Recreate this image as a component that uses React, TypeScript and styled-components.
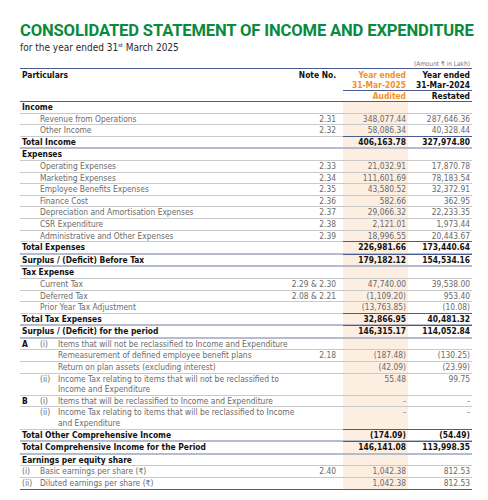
import React from "react";
import styled, { createGlobalStyle } from "styled-components";

const GlobalStyle = createGlobalStyle`
  html, body {
    margin: 0;
    padding: 0;
    background: #ffffff;
  }
  body {
    font-family: "DejaVu Sans Condensed", "DejaVu Sans", sans-serif;
    font-stretch: condensed;
    color: #222;
  }
`;

type Kind = "section" | "item" | "total";

interface Line {
  kind: Kind;
  label: React.ReactNode;
  mark?: string;
  roman?: string;
  indent?: 0 | 1 | 2;
  note?: string;
  cur?: string;
  prev?: string;
}

const rows: Line[] = [
  { kind: "section", label: "Income" },
  { kind: "item", indent: 1, label: "Revenue from Operations", note: "2.31", cur: "348,077.44", prev: "287,646.36" },
  { kind: "item", indent: 1, label: "Other Income", note: "2.32", cur: "58,086.34", prev: "40,328.44" },
  { kind: "total", label: "Total Income", cur: "406,163.78", prev: "327,974.80" },
  { kind: "section", label: "Expenses" },
  { kind: "item", indent: 1, label: "Operating Expenses", note: "2.33", cur: "21,032.91", prev: "17,870.78" },
  { kind: "item", indent: 1, label: "Marketing Expenses", note: "2.34", cur: "111,601.69", prev: "78,183.54" },
  { kind: "item", indent: 1, label: "Employee Benefits Expenses", note: "2.35", cur: "43,580.52", prev: "32,372.91" },
  { kind: "item", indent: 1, label: "Finance Cost", note: "2.36", cur: "582.66", prev: "362.95" },
  { kind: "item", indent: 1, label: "Depreciation and Amortisation Expenses", note: "2.37", cur: "29,066.32", prev: "22,233.35" },
  { kind: "item", indent: 1, label: "CSR Expenditure", note: "2.38", cur: "2,121.01", prev: "1,973.44" },
  { kind: "item", indent: 1, label: "Administrative and Other Expenses", note: "2.39", cur: "18,996.55", prev: "20,443.67" },
  { kind: "total", label: "Total Expenses", cur: "226,981.66", prev: "173,440.64" },
  { kind: "total", label: "Surplus / (Deficit) Before Tax", cur: "179,182.12", prev: "154,534.16" },
  { kind: "section", label: "Tax Expense" },
  { kind: "item", indent: 1, label: "Current Tax", note: "2.29 & 2.30", cur: "47,740.00", prev: "39,538.00" },
  { kind: "item", indent: 1, label: "Deferred Tax", note: "2.08 & 2.21", cur: "(1,109.20)", prev: "953.40" },
  { kind: "item", indent: 1, label: "Prior Year Tax Adjustment", cur: "(13,763.85)", prev: "(10.08)" },
  { kind: "total", label: "Total Tax Expenses", cur: "32,866.95", prev: "40,481.32" },
  { kind: "total", label: "Surplus / (Deficit) for the period", cur: "146,315.17", prev: "114,052.84" },
  { kind: "item", mark: "A", roman: "(i)", label: "Items that will not be reclassified to Income and Expenditure" },
  { kind: "item", indent: 2, label: "Remeasurement of defined employee benefit plans", note: "2.18", cur: "(187.48)", prev: "(130.25)" },
  { kind: "item", indent: 2, label: "Return on plan assets (excluding interest)", cur: "(42.09)", prev: "(23.99)" },
  {
    kind: "item",
    mark: " ",
    roman: "(ii)",
    label: (
      <>
        Income Tax relating to items that will not be reclassified to
        <br />
        Income and Expenditure
      </>
    ),
    cur: "55.48",
    prev: "99.75",
  },
  { kind: "item", mark: "B", roman: "(i)", label: "Items that will be reclassified to Income and Expenditure", cur: "-", prev: "-" },
  {
    kind: "item",
    mark: " ",
    roman: "(ii)",
    label: (
      <>
        Income Tax relating to items that will be reclassified to Income
        <br />
        and Expenditure
      </>
    ),
    cur: "-",
    prev: "-",
  },
  { kind: "total", label: "Total Other Comprehensive Income", cur: "(174.09)", prev: "(54.49)" },
  { kind: "total", label: "Total Comprehensive Income for the Period", cur: "146,141.08", prev: "113,998.35" },
  { kind: "section", label: "Earnings per equity share" },
  { kind: "item", mark: "(i)", label: "Basic earnings per share (₹)", note: "2.40", cur: "1,042.38", prev: "812.53" },
  { kind: "item", mark: "(ii)", label: "Diluted earnings per share (₹)", cur: "1,042.38", prev: "812.53" },
];

const App = (): JSX.Element => {
  return (
    <>
      <GlobalStyle />
      <Page>
        <Title>CONSOLIDATED STATEMENT OF INCOME AND EXPENDITURE</Title>
        <Subtitle>
          for the year ended 31<sup>st</sup> March 2025
        </Subtitle>
        <Unit>(Amount ₹ in Lakh)</Unit>
        <Statement>
          <Head>
            <HeadCell>Particulars</HeadCell>
            <HeadCell $align="right">Note No.</HeadCell>
            <YearCol>
              <HeadLine $orange>Year ended</HeadLine>
              <HeadLine $orange>31-Mar-2025</HeadLine>
              <HeadLine $orange $rule>Audited</HeadLine>
            </YearCol>
            <YearCol>
              <HeadLine>Year ended</HeadLine>
              <HeadLine>31-Mar-2024</HeadLine>
              <HeadLine $rule>Restated</HeadLine>
            </YearCol>
          </Head>
          {rows.map((r, i) => (
            <Row key={i} $kind={r.kind} $last={i === rows.length - 1}>
              <Label $kind={r.kind} $indent={r.indent ?? 0}>
                {r.mark && (
                  <Mark $strong={r.mark === "A" || r.mark === "B"}>{r.mark}</Mark>
                )}
                {r.roman && <Mark>{r.roman}</Mark>}
                <LabelText>{r.label}</LabelText>
              </Label>
              <Note>{r.note}</Note>
              <Amount $current $kind={r.kind}>
                {r.cur}
              </Amount>
              <Amount $kind={r.kind}>{r.prev}</Amount>
            </Row>
          ))}
        </Statement>
      </Page>
    </>
  );
};

export default App;

const Page = styled.div`
  width: 452px;
  padding: 19px 20px 10px;
`;

const Title = styled.h1`
  margin: 0;
  font-family: Roboto, "DejaVu Sans", sans-serif;
  font-stretch: normal;
  font-size: 16.6px;
  line-height: 23px;
  font-weight: 700;
  letter-spacing: -0.15px;
  color: #0a8a3c;
  white-space: nowrap;
`;

const Subtitle = styled.div`
  font-size: 10px;
  line-height: 11px;
  color: #2b2b2b;
  sup {
    font-size: 5.5px;
    vertical-align: 4px;
    line-height: 0;
  }
`;

const Unit = styled.div`
  margin-top: 7px;
  text-align: right;
  font-size: 6.5px;
  line-height: 8px;
  color: #777;
  padding-right: 2px;
`;

const Statement = styled.div`
  display: flex;
  flex-direction: column;
  font-size: 8.4px;
`;

const Head = styled.div`
  display: grid;
  grid-template-columns: 255px 68px 65px 64px;
  border-top: 1px solid #4b5b94;
  border-bottom: 1.5px solid #4b5b94;
  font-weight: 700;
  color: #111;
`;

const HeadCell = styled.div<{ $align?: "right" }>`
  padding: 1px ${(p) => (p.$align ? "7px" : "0")} 0 2px;
  text-align: ${(p) => p.$align ?? "left"};
  line-height: 10px;
`;

const YearCol = styled.div`
  display: flex;
  flex-direction: column;
  text-align: right;
`;

const HeadLine = styled.div<{ $orange?: boolean; $rule?: boolean }>`
  color: ${(p) => (p.$orange ? "#f39124" : "#111")};
  line-height: 10px;
  padding: 0 2px;
  border-top: ${(p) => (p.$rule ? "1px solid #4b5b94" : "0")};
  &:first-child {
    padding-top: 1px;
  }
`;

const Row = styled.div<{ $kind: Kind; $last: boolean }>`
  display: grid;
  grid-template-columns: 255px 68px 65px 64px;
  border-bottom: ${(p) =>
    p.$last
      ? "1.5px solid #4b5b94"
      : p.$kind === "total"
      ? "2px solid #b6bccd"
      : "1px solid #c9c9c9"};
  line-height: 10.6px;
`;

const Label = styled.div<{ $kind: Kind; $indent: number }>`
  display: flex;
  padding-left: ${(p) => 2 + p.$indent * 18}px;
  color: ${(p) => (p.$kind === "item" ? "#6a6a6a" : "#111")};
  font-weight: ${(p) => (p.$kind === "item" ? 400 : 700)};
  white-space: nowrap;
`;

const Mark = styled.span<{ $strong?: boolean }>`
  width: 18px;
  flex: none;
  white-space: pre;
  color: ${(p) => (p.$strong ? "#111" : "#6a6a6a")};
  font-weight: ${(p) => (p.$strong ? 700 : 400)};
`;

const LabelText = styled.span`
  white-space: nowrap;
`;

const Note = styled.div`
  text-align: right;
  padding-right: 7px;
  color: #6a6a6a;
`;

const Amount = styled.div<{ $current?: boolean; $kind: Kind }>`
  text-align: right;
  padding-right: 2px;
  background: ${(p) => (p.$current ? "#fdeee2" : "transparent")};
  color: ${(p) => (p.$kind === "total" ? "#111" : "#6a6a6a")};
  font-weight: ${(p) => (p.$kind === "total" ? 700 : 400)};
  border-top: ${(p) => (p.$kind === "total" ? "1px solid #4b5b94" : "0")};
  margin-top: ${(p) => (p.$kind === "total" ? "-1px" : "0")};
`;
